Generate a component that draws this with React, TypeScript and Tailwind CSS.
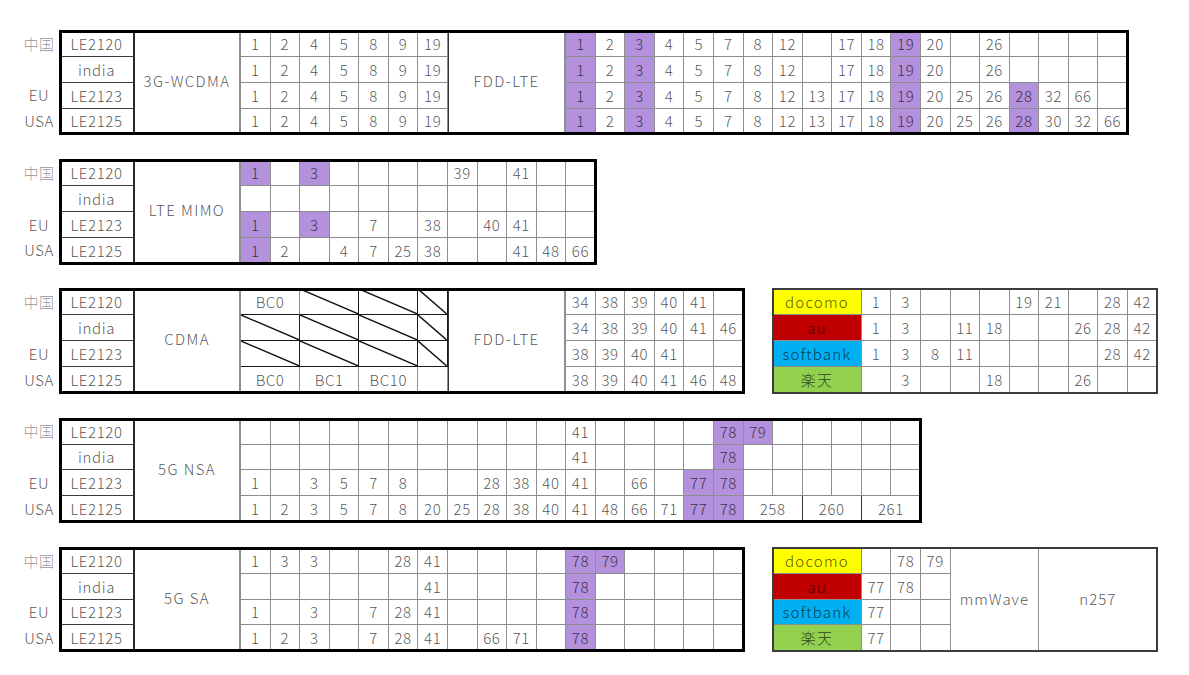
import React from "react";

const LE = ["LE2120", "india", "LE2123", "LE2125"];

function Cell({ v, className = "" }: { v?: React.ReactNode; className?: string }) {
  return (
    <div className={`flex items-center justify-center border-r border-b border-[#8e8e8e] leading-none ${className}`}>
      {v}
    </div>
  );
}

function band(s: string, key: React.Key) {
  const purple = s.startsWith("*");
  const v = purple ? s.slice(1) : s;
  return <Cell key={key} v={v} className={purple ? "bg-[#b391dc]" : ""} />;
}

function LECell({ v }: { v: string }) {
  return (
    <div className="flex items-center justify-center border-r-2 border-b border-r-[#2a2a2a] border-b-[#3a3a3a] leading-none">
      {v}
    </div>
  );
}

function Label({ v, className = "" }: { v: string; className?: string }) {
  return (
    <div className={`row-span-4 flex items-center justify-center border-r-2 border-b border-[#8e8e8e] pb-[2px] tracking-[1.4px] ${className}`}>
      {v}
    </div>
  );
}

function Diag({ className = "" }: { className?: string }) {
  return (
    <div className={`border-r border-b border-[#1a1a1a] ${className}`}>
      <svg className="block h-full w-full" viewBox="0 0 100 100" preserveAspectRatio="none">
        <line x1="0" y1="0" x2="100" y2="100" stroke="#111" strokeWidth="1.4" vectorEffect="non-scaling-stroke" />
      </svg>
    </div>
  );
}

function Regions() {
  return (
    <div className="grid w-[60px] shrink-0 grid-rows-[repeat(4,25.85px)] pl-[18px]">
      <div className="flex items-center justify-center text-black/45">中国</div>
      <div />
      <div className="flex items-center justify-center">EU</div>
      <div className="flex items-center justify-center">USA</div>
    </div>
  );
}

const T1_3G = ["1", "2", "4", "5", "8", "9", "19"];
const T1_FDD = [
  ["*1", "2", "*3", "4", "5", "7", "8", "12", "", "17", "18", "*19", "20", "", "26", "", "", "", ""],
  ["*1", "2", "*3", "4", "5", "7", "8", "12", "", "17", "18", "*19", "20", "", "26", "", "", "", ""],
  ["*1", "2", "*3", "4", "5", "7", "8", "12", "13", "17", "18", "*19", "20", "25", "26", "*28", "32", "66", ""],
  ["*1", "2", "*3", "4", "5", "7", "8", "12", "13", "17", "18", "*19", "20", "25", "26", "*28", "30", "32", "66"],
];

const T2 = [
  ["*1", "", "*3", "", "", "", "", "39", "", "41", "", ""],
  ["", "", "", "", "", "", "", "", "", "", "", ""],
  ["*1", "", "*3", "", "7", "", "38", "", "40", "41", "", ""],
  ["*1", "2", "", "4", "7", "25", "38", "", "", "41", "48", "66"],
];

const T3_FDD = [
  ["34", "38", "39", "40", "41", ""],
  ["34", "38", "39", "40", "41", "46"],
  ["38", "39", "40", "41", "", ""],
  ["38", "39", "40", "41", "46", "48"],
];

const CARRIERS = [
  { name: "docomo", cls: "bg-[#ffff00] tracking-[1.2px]" },
  { name: "au", cls: "bg-[#c00000] tracking-[1.2px]" },
  { name: "softbank", cls: "bg-[#00b0f0] tracking-[1.2px]" },
  { name: "楽天", cls: "bg-[#92d050] tracking-[1.2px]" },
];

const C1 = [
  ["1", "3", "", "", "", "19", "21", "", "28", "42"],
  ["1", "3", "", "11", "18", "", "", "26", "28", "42"],
  ["1", "3", "8", "11", "", "", "", "", "28", "42"],
  ["", "3", "", "", "18", "", "", "26", "", ""],
];

const T5 = [
  ["", "", "", "", "", "", "", "", "", "", "", "41", "", "", "", "", "*78", "*79", "", "", "", "", ""],
  ["", "", "", "", "", "", "", "", "", "", "", "41", "", "", "", "", "*78", "", "", "", "", "", ""],
  ["1", "", "3", "5", "7", "8", "", "", "28", "38", "40", "41", "", "66", "", "*77", "*78", "", "", "", "", "", ""],
];
const T5_LAST = ["1", "2", "3", "5", "7", "8", "20", "25", "28", "38", "40", "41", "48", "66", "71", "*77", "*78"];

const T6 = [
  ["1", "3", "3", "", "", "28", "41", "", "", "", "", "*78", "*79", "", "", "", ""],
  ["", "", "", "", "", "", "41", "", "", "", "", "*78", "", "", "", "", ""],
  ["1", "", "3", "", "7", "28", "41", "", "", "", "", "*78", "", "", "", "", ""],
  ["1", "2", "3", "", "7", "28", "41", "", "66", "71", "", "*78", "", "", "", "", ""],
];

const C2 = [
  ["", "78", "79"],
  ["77", "78", ""],
  ["77", "", ""],
  ["77", "", ""],
];

const frame = "outline-3 outline-solid outline-black -outline-offset-2";
const cframe = "outline-2 outline-solid outline-[#3c3c3c] -outline-offset-1";

export default function App() {
  return (
    <div className="flex min-h-[675px] w-[1189px] flex-col gap-[25.85px] bg-white pt-[31px] font-['Noto_Sans_CJK_JP','Noto_Sans',sans-serif] text-[15px] font-light tracking-[0.6px] text-black/70">
      {/* Table 1: 3G-WCDMA + FDD-LTE */}
      <div className="flex">
        <Regions />
        <div className={`grid grid-cols-[75px_106px_repeat(30,29.57px)] grid-rows-[repeat(4,25.85px)] ${frame}`}>
          {LE.map((le, r) => (
            <React.Fragment key={r}>
              <LECell v={le} />
              {r === 0 && <Label v="3G-WCDMA" />}
              {T1_3G.map((b, i) => band(b, "a" + i))}
              {r === 0 && <Label v="FDD-LTE" className="col-span-4 border-l border-l-[#333]" />}
              {T1_FDD[r].map((b, i) => band(b, "b" + i))}
            </React.Fragment>
          ))}
        </div>
      </div>

      {/* Table 2: LTE MIMO */}
      <div className="flex">
        <Regions />
        <div className={`grid grid-cols-[75px_106px_repeat(12,29.57px)] grid-rows-[repeat(4,25.85px)] ${frame}`}>
          {LE.map((le, r) => (
            <React.Fragment key={r}>
              <LECell v={le} />
              {r === 0 && <Label v="LTE MIMO" />}
              {T2[r].map((b, i) => band(b, i))}
            </React.Fragment>
          ))}
        </div>
      </div>

      {/* Table 3: CDMA + FDD-LTE, carrier table */}
      <div className="flex">
        <Regions />
        <div className={`grid grid-cols-[75px_106px_repeat(17,29.57px)] grid-rows-[repeat(4,25.85px)] ${frame}`}>
          {LE.map((le, r) => (
            <React.Fragment key={r}>
              <LECell v={le} />
              {r === 0 && <Label v="CDMA" />}
              {r === 0 && (
                <>
                  <Cell v="BC0" className="col-span-2 border-b-[#1a1a1a]" />
                  <Diag className="col-span-2" />
                  <Diag className="col-span-2" />
                  <Diag />
                </>
              )}
              {(r === 1 || r === 2) && (
                <>
                  <Diag className="col-span-2" />
                  <Diag className="col-span-2" />
                  <Diag className="col-span-2" />
                  <Diag />
                </>
              )}
              {r === 3 && (
                <>
                  <Cell v="BC0" className="col-span-2" />
                  <Cell v="BC1" className="col-span-2" />
                  <Cell v="BC10" className="col-span-2" />
                  <Cell />
                </>
              )}
              {r === 0 && <Label v="FDD-LTE" className="col-span-4 border-l border-l-[#333]" />}
              {T3_FDD[r].map((b, i) => band(b, i))}
            </React.Fragment>
          ))}
        </div>
        <div className={`ml-[29.57px] grid grid-cols-[88.71px_repeat(10,29.57px)] grid-rows-[repeat(4,25.85px)] ${cframe}`}>
          {CARRIERS.map((c, r) => (
            <React.Fragment key={r}>
              <Cell v={c.name} className={c.cls} />
              {C1[r].map((b, i) => band(b, i))}
            </React.Fragment>
          ))}
        </div>
      </div>

      {/* Table 5: 5G NSA */}
      <div className="flex">
        <Regions />
        <div className={`grid grid-cols-[75px_106px_repeat(23,29.57px)] grid-rows-[repeat(4,25.85px)] ${frame}`}>
          {LE.map((le, r) => (
            <React.Fragment key={r}>
              <LECell v={le} />
              {r === 0 && <Label v="5G NSA" />}
              {r < 3 && T5[r].map((b, i) => band(b, i))}
              {r === 3 && (
                <>
                  {T5_LAST.map((b, i) => band(b, i))}
                  <Cell v="258" className="col-span-2 border-r-[#333]" />
                  <Cell v="260" className="col-span-2 border-r-[#333]" />
                  <Cell v="261" className="col-span-2" />
                </>
              )}
            </React.Fragment>
          ))}
        </div>
      </div>

      {/* Table 6: 5G SA, mmWave table */}
      <div className="flex">
        <Regions />
        <div className={`grid grid-cols-[75px_106px_repeat(17,29.57px)] grid-rows-[repeat(4,25.85px)] ${frame}`}>
          {LE.map((le, r) => (
            <React.Fragment key={r}>
              <LECell v={le} />
              {r === 0 && <Label v="5G SA" />}
              {T6[r].map((b, i) => band(b, i))}
            </React.Fragment>
          ))}
        </div>
        <div className={`ml-[29.57px] grid grid-cols-[88.71px_repeat(3,29.57px)_88.71px_118.28px] grid-rows-[repeat(4,25.85px)] ${cframe}`}>
          {CARRIERS.map((c, r) => (
            <React.Fragment key={r}>
              <Cell v={c.name} className={c.cls} />
              {C2[r].map((b, i) => band(b, i))}
              {r === 0 && (
                <>
                  <div className="row-span-4 flex items-center justify-center border-r border-b border-[#8e8e8e] tracking-[1px]">mmWave</div>
                  <div className="row-span-4 flex items-center justify-center border-r border-b border-[#8e8e8e] tracking-[1px]">n257</div>
                </>
              )}
            </React.Fragment>
          ))}
        </div>
      </div>
    </div>
  );
}
